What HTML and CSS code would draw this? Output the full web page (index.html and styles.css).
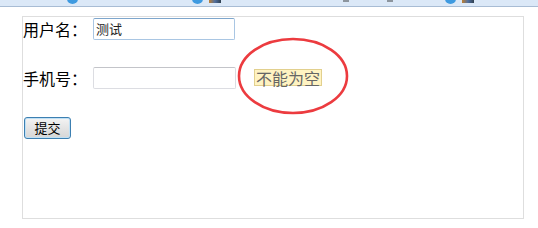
FILE: index.html
```html
<!DOCTYPE html>
<html lang="zh-CN">
<head>
    <meta charset="UTF-8">
    <title>表单验证</title>
    <link rel="stylesheet" href="styles.css">
</head>
<body>
    <div class="tabbar">
        <span class="tab-icon" style="margin-left: 67px"></span>
        <span class="tab-icon" style="margin-left: 114px"></span>
        <span class="tab-text" style="margin-left: 6px"></span>
        <span class="tab-dot" style="margin-left: 122px"></span>
        <span class="tab-dot" style="margin-left: 38px"></span>
        <span class="tab-icon" style="margin-left: 52px"></span>
        <span class="tab-text" style="margin-left: 6px"></span>
    </div>

    <form class="box" onsubmit="return check()">
        <div class="row">
            <label class="label">用户名：</label>
            <input type="text" class="field field-user" value="测试">
        </div>
        <div class="row row-phone">
            <label class="label">手机号：</label>
            <input type="text" class="field" id="phone">
            <span class="tip-wrap">
                <span class="tip" id="tip">不能为空</span>
                <svg class="mark" width="114" height="80" viewBox="0 0 114 80">
                    <ellipse cx="56" cy="39" rx="54" ry="37" fill="none" stroke="#ec3b3f" stroke-width="2.6"/>
                </svg>
            </span>
        </div>
        <div class="row row-btn">
            <button type="submit" class="btn">提交</button>
        </div>
    </form>

    <script>
        function check() {
            const phone = document.getElementById('phone');
            document.getElementById('tip').style.visibility = phone.value ? 'hidden' : 'visible';
            return false;
        }
    </script>
</body>
</html>
```

FILE: styles.css
```css
body {
    margin: 0;
    font-family: "Noto Sans CJK SC", "Liberation Sans", sans-serif;
    background: #fff;
}

.tabbar {
    display: flex;
    height: 6px;
    background-color: #dbe8f7;
    border-bottom: 1px solid #a8bcd4;
    overflow: hidden;
}

.tab-icon {
    width: 11px;
    height: 10px;
    margin-top: -6px;
    border-radius: 50%;
    background-color: #3e9ae0;
}

.tab-text {
    width: 12px;
    height: 3px;
    background: linear-gradient(90deg, #c08030, #5070a0, #30404f);
}

.tab-dot {
    width: 6px;
    height: 2px;
    background-color: #8c959e;
}

.box {
    width: 500px;
    height: 201px;
    margin: 9px 0 0 22px;
    border: 1px solid #dedede;
}

.row {
    display: flex;
    align-items: center;
    height: 23px;
}

.row-phone {
    margin-top: 26px;
}

.row-btn {
    margin-top: 27px;
    padding-left: 1px;
}

.label {
    width: 70px;
    font-size: 16px;
    color: #000;
}

.field {
    box-sizing: border-box;
    width: 143px;
    height: 22px;
    padding: 0 2px;
    font-family: "Noto Sans CJK SC", sans-serif;
    font-size: 13px;
    color: #222;
    border: 1px solid #dcdde2;
    border-top-color: #c3c4c9;
    border-radius: 2px;
}

.field-user {
    width: 142px;
    border-color: #a9c6e3;
    border-top-color: #7ea6cc;
}

.tip-wrap {
    position: relative;
    margin-left: 18px;
}

.tip {
    display: inline-block;
    height: 17px;
    line-height: 16px;
    padding: 0 1px;
    font-size: 16px;
    color: #666;
    background-color: #fff3c2;
    border: 1px solid #e2d08e;
    box-sizing: border-box;
}

.mark {
    position: absolute;
    left: -17px;
    top: -29px;
}

.btn {
    width: 47px;
    height: 22px;
    padding: 0;
    font-family: "Noto Sans CJK SC", sans-serif;
    font-size: 13px;
    color: #000;
    border: 1px solid #3c7fb1;
    border-radius: 3px;
    background: linear-gradient(#f4f4f4, #e4e4e4 50%, #d6d6d6);
    box-shadow: inset 0 0 0 1px #bfe0f5;
    cursor: pointer;
}
```
